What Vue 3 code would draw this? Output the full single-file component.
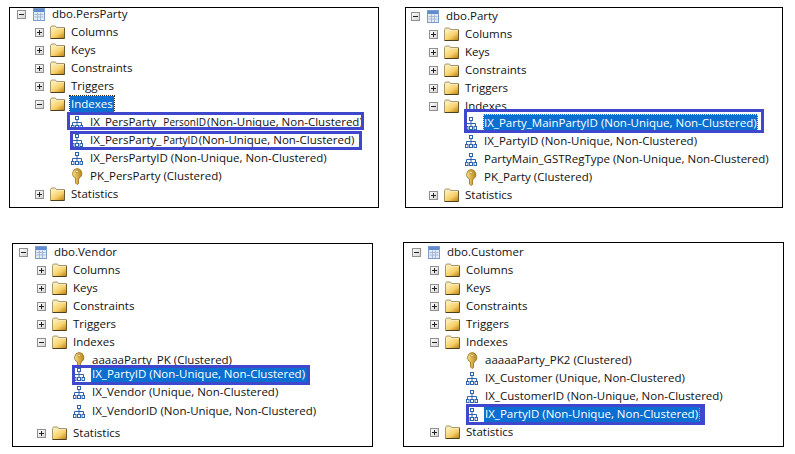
<script setup>
const idx = (label, extra = {}) => ({ level: 2, icon: 'index', label, ...extra })
const key = (label, extra = {}) => ({ level: 2, icon: 'key', label, ...extra })
const folder = (label, exp = 'plus', extra = {}) => ({ level: 1, icon: 'folder', exp, label, ...extra })
const head = (label) => [
  { level: 0, icon: 'table', exp: 'minus', label },
  folder('Columns'), folder('Keys'), folder('Constraints'), folder('Triggers')
]

const rows = [
  [
    { w: 370, h: 201, ml: 9, mt: 0, pl: 7, top: -3,
      marks: [{ x: 57, y: 104, w: 297, h: 18 }, { x: 60, y: 123, w: 292, h: 19 }],
      items: [
        ...head('dbo.PersParty'),
        folder('Indexes', 'minus', { focus: true }),
        idx('IX_PersParty_', { small: 'PersonID', rest: '(Non-Unique, Non-Clustered)' }),
        idx('IX_PersParty_', { small: 'PartyID', rest: '(Non-Unique, Non-Clustered)' }),
        idx('IX_PersPartyID (Non-Unique, Non-Clustered)'),
        key('PK_PersParty (Clustered)'),
        folder('Statistics')
      ] },
    { w: 378, h: 201, ml: 26, mt: 0, pl: 5, top: -1,
      marks: [{ x: 58, y: 101, w: 300, h: 24 }],
      items: [
        ...head('dbo.Party'),
        folder('Indexes', 'minus'),
        idx('IX_Party_MainPartyID (Non-Unique, Non-Clustered)', { sel: 'dotted', dy: -1, whiteIcon: true }),
        idx('IX_PartyID (Non-Unique, Non-Clustered)'),
        idx('PartyMain_GSTRegType (Non-Unique, Non-Clustered)'),
        key('PK_Party (Clustered)'),
        folder('Statistics')
      ] }
  ],
  [
    { w: 361, h: 204, ml: 12, mt: 1, pl: 6, top: -1,
      marks: [{ x: 59, y: 121, w: 238, h: 20 }],
      items: [
        ...head('dbo.Vendor'),
        folder('Indexes', 'minus'),
        key('aaaaaParty_PK (Clustered)'),
        idx('IX_PartyID (Non-Unique, Non-Clustered)', { sel: 'plain', dy: -4, whiteIcon: true }),
        idx('IX_Vendor (Unique, Non-Clustered)'),
        idx('IX_VendorID (Non-Unique, Non-Clustered)', { dy: 1 }),
        folder('Statistics', 'plus', { dy: 4 })
      ] },
    { w: 381, h: 205, ml: 30, mt: 0, pl: 8, top: 0,
      marks: [{ x: 62, y: 161, w: 239, h: 21 }],
      items: [
        ...head('dbo.Customer'),
        folder('Indexes', 'minus'),
        key('aaaaaParty_PK2 (Clustered)'),
        idx('IX_Customer (Unique, Non-Clustered)'),
        idx('IX_CustomerID (Non-Unique, Non-Clustered)'),
        idx('IX_PartyID (Non-Unique, Non-Clustered)', { sel: 'edge', whiteIcon: true }),
        folder('Statistics')
      ] }
  ]
]
</script>

<template>
  <div class="page">
    <div v-for="(row, r) in rows" :key="r" class="band">
      <section
        v-for="(p, i) in row"
        :key="i"
        class="panel"
        :style="{ width: p.w + 'px', height: p.h + 'px', marginLeft: p.ml + 'px', marginTop: p.mt + 'px', paddingLeft: p.pl + 'px' }"
      >
        <ul class="tree" :style="{ marginTop: p.top + 'px' }">
          <li
            v-for="(it, n) in p.items"
            :key="n"
            class="row"
            :class="'lvl' + it.level"
            :style="{ paddingLeft: it.level * 19 + 'px', marginTop: (it.dy || 0) + 'px' }"
          >
            <span class="slot-exp">
              <svg v-if="it.exp" width="9" height="9" viewBox="0 0 9 9">
                <defs>
                  <linearGradient id="expfill" x1="0" y1="0" x2="1" y2="1">
                    <stop offset="0" stop-color="#ffffff" />
                    <stop offset="1" stop-color="#d4d4d4" />
                  </linearGradient>
                </defs>
                <rect x=".5" y=".5" width="8" height="8" fill="url(#expfill)" stroke="#8f8f8f" />
                <path d="M2 4.5h5" stroke="#222" />
                <path v-if="it.exp === 'plus'" d="M4.5 2v5" stroke="#222" />
              </svg>
            </span>
            <span class="slot-icon" :class="{ white: it.whiteIcon }">
              <svg v-if="it.icon === 'table'" width="12" height="13" viewBox="0 0 12 13">
                <rect x=".5" y=".5" width="11" height="12" fill="#e3ebf6" stroke="#7f9bcb" />
                <rect x="1" y="1" width="10" height="3" fill="#5f8bd0" />
                <path d="M1.5 6.5h9M1.5 9h9M4.5 4.5v7.5M7.5 4.5v7.5" stroke="#a8b9d3" />
              </svg>
              <svg v-else-if="it.icon === 'folder'" class="fold" width="15" height="14" viewBox="0 0 15 14">
                <defs>
                  <linearGradient id="foldfill" x1="0" y1="0" x2="1" y2="1">
                    <stop offset="0" stop-color="#fff1b8" />
                    <stop offset=".55" stop-color="#f7d069" />
                    <stop offset="1" stop-color="#bf8414" />
                  </linearGradient>
                </defs>
                <path d="M.5 13V2.5l1-1.5h4l1 1.5h8V13z" fill="#f8e9b8" stroke="#a89868" />
                <rect x="1" y="4" width="13" height="9" fill="url(#foldfill)" />
                <path d="M.5 13.5h14" stroke="#4e3f1c" />
                <path d="M14.5 3v10.5" stroke="#6b5a2c" />
              </svg>
              <svg v-else-if="it.icon === 'index'" width="12" height="13" viewBox="0 0 12 13">
                <g fill="none" stroke="#2e62ad">
                  <rect x="4.5" y=".5" width="3" height="3" />
                  <path d="M6 3.5v3M1.5 9V6.5h9V9M6 6.5V9" />
                  <rect x=".5" y="9.5" width="2.5" height="3" />
                  <rect x="4.5" y="9.5" width="3" height="3" />
                  <rect x="9" y="9.5" width="2.5" height="3" />
                </g>
              </svg>
              <svg v-else width="12" height="17" viewBox="0 0 12 17">
                <defs>
                  <linearGradient id="keyfill" x1="0" y1="0" x2="1" y2="0">
                    <stop offset="0" stop-color="#f9e088" />
                    <stop offset="1" stop-color="#b88216" />
                  </linearGradient>
                </defs>
                <path d="M6 .5a5 5 0 0 1 2 9.500V11l-1 1 1 1-1 1 1 1-2 1.500L4.500 15V10A5 5 0 0 1 6 .5z" fill="url(#keyfill)" stroke="#9a6f14" stroke-width=".8" />
                <circle cx="6" cy="3.500" r="1.300" fill="#fff6d6" stroke="#9a6f14" stroke-width=".6" />
              </svg>
            </span>
            <span class="label" :class="[it.sel ? 'sel sel-' + it.sel : '', { focus: it.focus }]">
              {{ it.label }}<template v-if="it.small"><span class="small">{{ it.small }}</span><span class="rest">{{ it.rest }}</span></template>
            </span>
          </li>
        </ul>
        <div
          v-for="(m, k) in p.marks"
          :key="'m' + k"
          class="mark"
          :style="{ left: m.x + 'px', top: m.y + 'px', width: m.w + 'px', height: m.h + 'px' }"
        ></div>
      </section>
    </div>
  </div>
</template>

<style scoped>
.page {
  width: 795px;
  height: 454px;
  padding-top: 7px;
  box-sizing: border-box;
  background: #fff;
  overflow: hidden;
  font-family: "Open Sans", "Noto Sans", sans-serif;
  font-size: 11.5px;
  color: #111;
}
.band {
  display: flex;
  align-items: flex-start;
  margin-bottom: 34px;
}
.panel {
  position: relative;
  flex: none;
  box-sizing: border-box;
  border: 1px solid #000;
  overflow: hidden;
}
.tree {
  list-style: none;
  margin: 0;
  padding: 0;
}
.row {
  display: flex;
  align-items: center;
  height: 18px;
  white-space: nowrap;
}
.slot-exp {
  flex: none;
  width: 16px;
  height: 18px;
  display: flex;
  align-items: center;
}
.lvl1 .slot-exp svg {
  margin-left: -1px;
}
.slot-exp svg,
.slot-icon svg {
  display: block;
}
.slot-icon {
  flex: none;
  width: 19px;
  height: 18px;
  display: flex;
  align-items: center;
  overflow: visible;
}
.slot-icon .fold {
  margin-left: -2px;
  flex: none;
}
.slot-icon.white {
  background: #fff;
}
.label {
  line-height: 16px;
  padding: 0 1px;
  margin-left: -1px;
}
.label.sel {
  background: #0a6fd1;
  color: #fff;
  line-height: 18px;
}
.sel-plain {
  padding-right: 4px;
}
.sel-dotted {
  outline: 1px dotted #f0e2a8;
  outline-offset: -1px;
}
.sel-edge {
  border-right: 1px dotted #d8a040;
  box-shadow: 4px 0 0 #3f48cc;
}
.label.focus {
  background: #0a6fd1;
  color: #fff;
  outline: 1px dotted #3a2a10;
  outline-offset: 0;
}
.small {
  font-size: 10px;
  margin-left: 2px;
}
.rest {
  margin-left: 1px;
}
.mark {
  position: absolute;
  box-sizing: border-box;
  border: 3px solid #3f48cc;
  pointer-events: none;
}
</style>
